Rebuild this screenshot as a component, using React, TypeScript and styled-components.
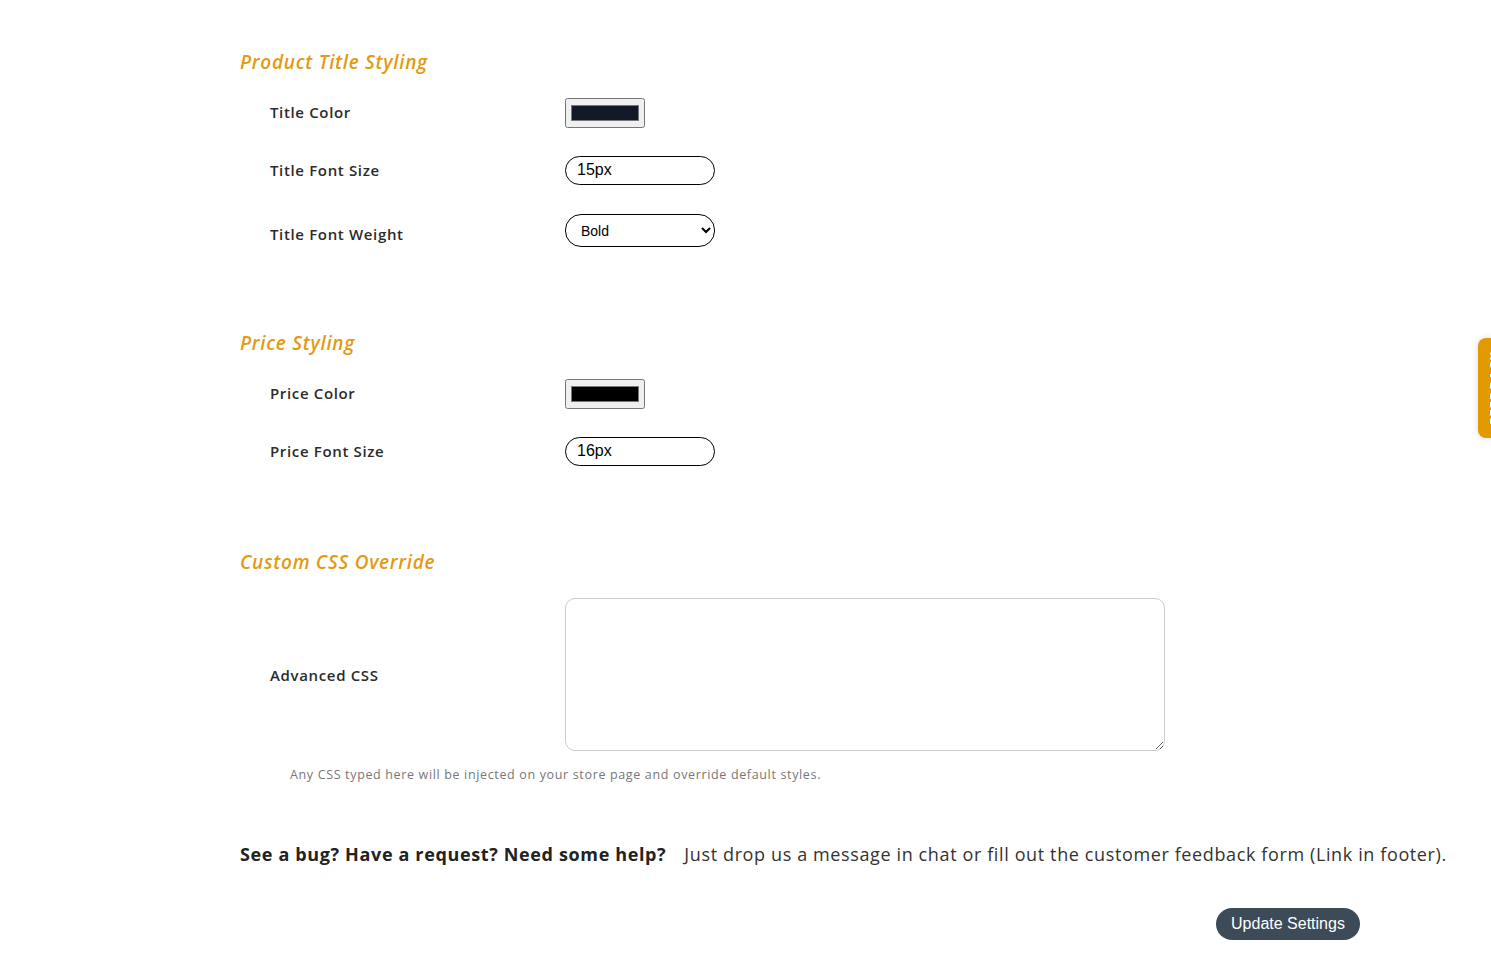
import React from 'react';
import styled, { createGlobalStyle } from 'styled-components';

const GlobalStyle = createGlobalStyle`
  html, body {
    margin: 0;
    padding: 0;
    background: #ffffff;
  }
  body {
    font-family: "Open Sans", "Liberation Sans", sans-serif;
    color: #2b2b2b;
  }
`;

const App: React.FC = () => {
  return (
    <>
      <GlobalStyle />
      <Page>
        <Section gap={69}>
          <SectionTitle>Product Title Styling</SectionTitle>
          <Row>
            <Label>Title Color</Label>
            <ColorInput type="color" defaultValue="#111827" />
          </Row>
          <Row>
            <Label>Title Font Size</Label>
            <PillInput type="text" defaultValue="15px" />
          </Row>
          <Row tall>
            <Label low>Title Font Weight</Label>
            <PillSelect defaultValue="bold">
              <option value="normal">Normal</option>
              <option value="bold">Bold</option>
            </PillSelect>
          </Row>
        </Section>

        <Section gap={70}>
          <SectionTitle>Price Styling</SectionTitle>
          <Row>
            <Label>Price Color</Label>
            <ColorInput type="color" defaultValue="#000000" />
          </Row>
          <Row>
            <Label>Price Font Size</Label>
            <PillInput type="text" defaultValue="16px" />
          </Row>
        </Section>

        <Section gap={0}>
          <SectionTitle>Custom CSS Override</SectionTitle>
          <Row>
            <Label>Advanced CSS</Label>
            <CssArea />
          </Row>
          <HelpText>Any CSS typed here will be injected on your store page and override default styles.</HelpText>
        </Section>

        <Support>
          <strong>See a bug? Have a request? Need some help?</strong>
          <span>Just drop us a message in chat or fill out the customer feedback form (Link in footer).</span>
        </Support>

        <Actions>
          <UpdateButton type="button">Update Settings</UpdateButton>
        </Actions>
      </Page>
      <SideTab>
        <TabText>FEEDBACK</TabText>
      </SideTab>
    </>
  );
};

const Page = styled.div`
  width: 1120px;
  padding: 50px 0 20px 240px;
`;

const Section = styled.div<{ gap: number }>`
  margin-bottom: ${({ gap }) => gap}px;
`;

const SectionTitle = styled.h3`
  margin: 0 0 9px;
  font-size: 19px;
  line-height: 24px;
  font-style: italic;
  font-weight: 600;
  letter-spacing: 0.7px;
  color: #e39a12;
`;

const Row = styled.div<{ tall?: boolean }>`
  display: grid;
  grid-template-columns: 325px auto;
  align-items: center;
  min-height: ${({ tall }) => (tall ? '63px' : '58px')};
`;

const Label = styled.label<{ low?: boolean }>`
  padding-left: 30px;
  margin-top: ${({ low }) => (low ? '6px' : '0')};
  font-size: 15px;
  font-weight: 600;
  letter-spacing: 0.65px;
  color: #2b2b2b;
`;

const ColorInput = styled.input`
  width: 80px;
  height: 30px;
  padding: 2px 3px;
  margin: 1px 0 0;
  box-sizing: border-box;
  cursor: pointer;
`;

const PillInput = styled.input`
  width: 150px;
  height: 29px;
  box-sizing: border-box;
  margin: 0;
  padding: 0 11px;
  border: 1px solid #000;
  border-radius: 15px;
  font-family: Arial, "Liberation Sans", sans-serif;
  font-size: 16px;
  color: #000;
  outline: none;
`;

const PillSelect = styled.select`
  width: 150px;
  height: 33px;
  box-sizing: border-box;
  margin: 0;
  padding: 0 11px;
  border: 1px solid #000;
  border-radius: 16px;
  background: #fff;
  font-family: Arial, "Liberation Sans", sans-serif;
  font-size: 14px;
  color: #000;
`;

const CssArea = styled.textarea`
  width: 600px;
  height: 153px;
  box-sizing: border-box;
  margin: 15px 0;
  border: 1px solid #cccccc;
  border-radius: 10px;
  resize: both;
  outline: none;
`;

const HelpText = styled.p`
  margin: 1px 0 0 50px;
  font-size: 12.5px;
  line-height: 16px;
  letter-spacing: 0.65px;
  color: #777;
`;

const Support = styled.div`
  display: flex;
  gap: 18px;
  margin-top: 59px;
  font-size: 18px;
  line-height: 24px;
  white-space: nowrap;

  strong {
    font-weight: 700;
    letter-spacing: 0.64px;
    color: #222;
  }

  span {
    letter-spacing: 0.62px;
    color: #333;
  }
`;

const Actions = styled.div`
  display: flex;
  justify-content: flex-end;
  margin-top: 42px;
`;

const UpdateButton = styled.button`
  width: 144px;
  height: 32px;
  border: none;
  border-radius: 16px;
  background: #3d4a57;
  color: #fff;
  font-family: Arial, "Liberation Sans", sans-serif;
  font-size: 16px;
  cursor: pointer;
`;

const SideTab = styled.div`
  position: fixed;
  top: 338px;
  left: 1478px;
  width: 40px;
  height: 100px;
  box-sizing: border-box;
  padding-left: 7px;
  border-radius: 8px;
  background: #e39a00;
  box-shadow: 0 0 6px rgba(0, 0, 0, 0.15);
  display: flex;
  align-items: center;
  justify-content: flex-start;
`;

const TabText = styled.span`
  writing-mode: vertical-rl;
  transform: rotate(180deg);
  color: #fff;
  font-size: 13px;
  font-weight: 700;
  letter-spacing: 1px;
`;

export default App;
